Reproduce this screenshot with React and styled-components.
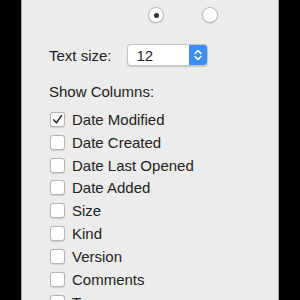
import React from "react";
import styled, { createGlobalStyle } from "styled-components";

const colors = {
  backdrop: "#000000",
  panel: "#ececec",
  edge: "#a9a9a9",
  text: "#222222",
  boxBorder: "#b4b4b4",
  blue: "#3b8ef5",
};

const Global = createGlobalStyle`
  html, body {
    margin: 0;
    padding: 0;
    background: ${colors.backdrop};
  }
  body {
    font-family: "Liberation Sans", Arial, sans-serif;
  }
`;

const Stage = styled.div`
  width: 300px;
  height: 300px;
  overflow: hidden;
  display: flex;
  justify-content: flex-start;
`;

const Panel = styled.div`
  margin-left: 21px;
  width: 229px;
  height: 300px;
  background: ${colors.panel};
  border-left: 1px solid ${colors.edge};
  border-right: 1px solid ${colors.edge};
  padding-left: 27px;
  box-sizing: content-box;
  color: ${colors.text};
  font-size: 15px;
`;

const RadioRow = styled.div`
  display: flex;
  gap: 38px;
  padding: 7px 0 0 99px;
`;

const Radio = styled.div`
  width: 16px;
  height: 16px;
  box-sizing: border-box;
  border-radius: 50%;
  background: #fff;
  border: 1px solid #b9b9b9;
  box-shadow: 0 0.5px 1px rgba(0, 0, 0, 0.15);
  display: flex;
  align-items: center;
  justify-content: center;

  &::after {
    content: "";
    width: 5px;
    height: 5px;
    border-radius: 50%;
    background: ${(p) => (p.$on ? "#333" : "transparent")};
  }
`;

const SizeRow = styled.div`
  display: flex;
  align-items: center;
  margin-top: 21px;
  height: 22px;
`;

const Label = styled.span`
  font-size: 15px;
  line-height: 17px;
  white-space: nowrap;
`;

const Select = styled.div`
  margin-left: 15px;
  width: 81px;
  height: 22px;
  box-sizing: border-box;
  display: flex;
  border-radius: 4px;
  background: #fff;
  border: 1px solid #c4c4c4;
  box-shadow: 0 0.5px 1px rgba(0, 0, 0, 0.15);
  overflow: hidden;
`;

const SelectValue = styled.div`
  flex: 1;
  padding-left: 9px;
  display: flex;
  align-items: center;
  font-size: 15px;
`;

const Stepper = styled.div`
  width: 18px;
  background: ${colors.blue};
  display: flex;
  align-items: center;
  justify-content: center;
`;

const Heading = styled.div`
  margin-top: 17px;
  font-size: 15px;
  line-height: 17px;
`;

const List = styled.div`
  margin-top: 8px;
  display: flex;
  flex-direction: column;
`;

const Row = styled.div`
  display: flex;
  align-items: center;
  height: 22.85px;
  gap: 7px;
`;

const Box = styled.div`
  margin-left: 1px;
  width: 15px;
  height: 15px;
  box-sizing: border-box;
  border-radius: 3px;
  background: #fff;
  border: 1px solid ${colors.boxBorder};
  box-shadow: 0 0.5px 1px rgba(0, 0, 0, 0.12);
  display: flex;
  align-items: center;
  justify-content: center;
`;

const columns = [
  { name: "Date Modified", on: true },
  { name: "Date Created" },
  { name: "Date Last Opened" },
  { name: "Date Added" },
  { name: "Size" },
  { name: "Kind" },
  { name: "Version" },
  { name: "Comments" },
  { name: "Tags" },
];

const Check = () => (
  <svg width="11" height="11" viewBox="0 0 10 10">
    <path d="M1.6 5.4 L4 8 L8.6 1.6" fill="none" stroke="#333" strokeWidth="1.5" strokeLinecap="round" strokeLinejoin="round" />
  </svg>
);

const Chevrons = () => (
  <svg width="10" height="14" viewBox="0 0 10 14">
    <path d="M2 5.5 L5 2.5 L8 5.5 M2 8.5 L5 11.5 L8 8.5" fill="none" stroke="#fff" strokeWidth="1.5" strokeLinecap="round" strokeLinejoin="round" />
  </svg>
);

export default function App() {
  return (
    <Stage>
      <Global />
      <Panel>
        <RadioRow>
          <Radio $on />
          <Radio />
        </RadioRow>
        <SizeRow>
          <Label>Text size:</Label>
          <Select>
            <SelectValue>12</SelectValue>
            <Stepper>
              <Chevrons />
            </Stepper>
          </Select>
        </SizeRow>
        <Heading>Show Columns:</Heading>
        <List>
          {columns.map((c) => (
            <Row key={c.name}>
              <Box>{c.on && <Check />}</Box>
              <Label>{c.name}</Label>
            </Row>
          ))}
        </List>
      </Panel>
    </Stage>
  );
}
